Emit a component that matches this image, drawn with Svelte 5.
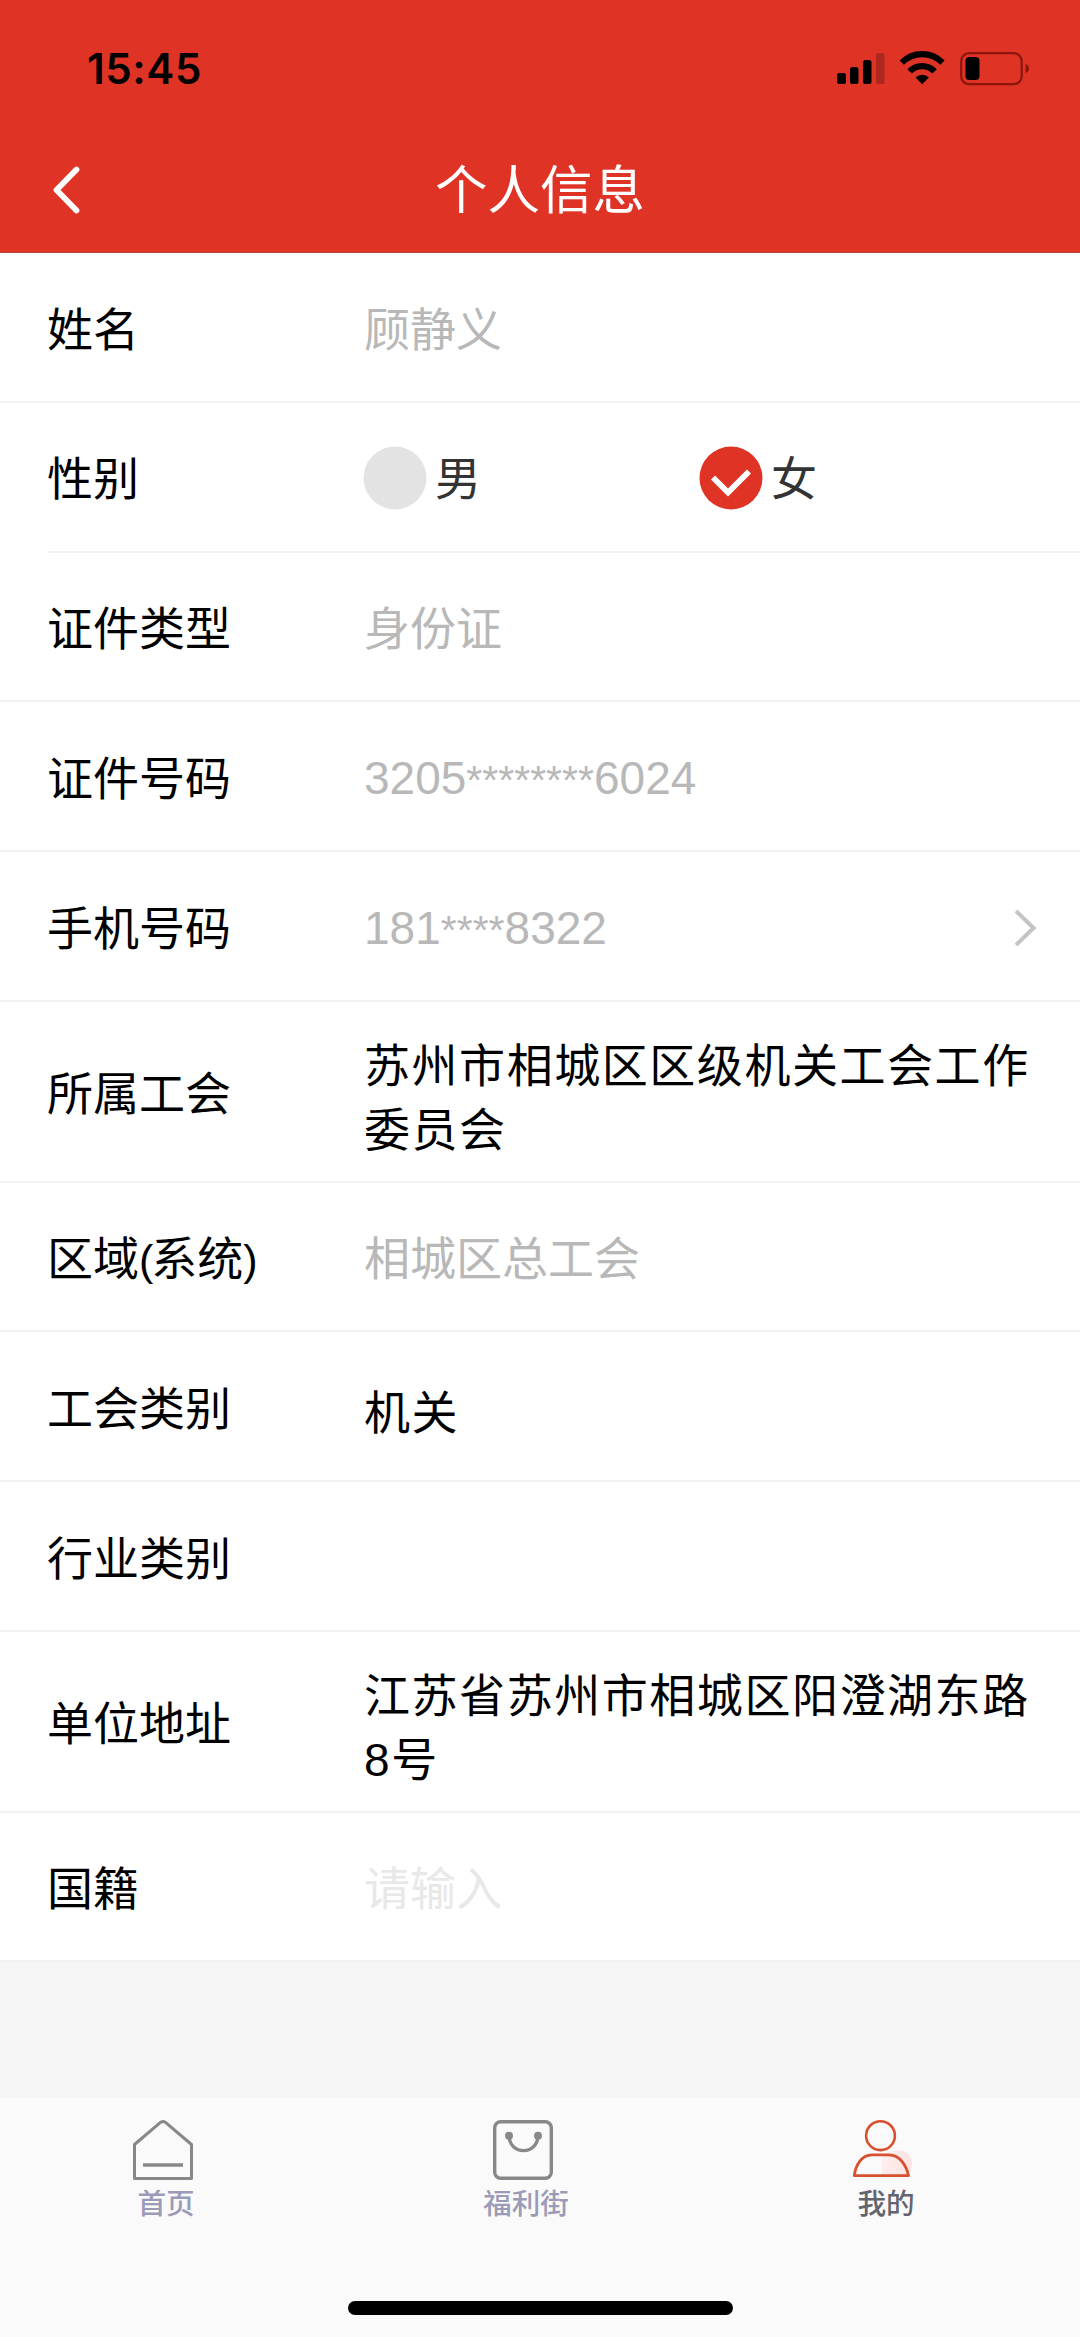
<script>
  const rows = [
    { label: '姓名', value: '顾静义', kind: 'muted' },
    { label: '性别', kind: 'gender', inset: true },
    { label: '证件类型', value: '身份证', kind: 'muted', short: true },
    { label: '证件号码', kind: 'masked', parts: ['3205', '********', '6024'] },
    { label: '手机号码', kind: 'masked', parts: ['181', '****', '8322'], arrow: true },
    { label: '所属工会', value: '苏州市相城区区级机关工会工作委员会', kind: 'text', tall: true },
    { label: '区域', note: '系统', value: '相城区总工会', kind: 'muted', short: true },
    { label: '工会类别', value: '机关', kind: 'text' },
    { label: '行业类别', value: '', kind: 'text' },
    { label: '单位地址', value: '江苏省苏州市相城区阳澄湖东路8号', kind: 'text', tall: true },
    { label: '国籍', value: '请输入', kind: 'placeholder', short: true },
  ];
</script>

<div class="screen">
  <header>
    <div class="status">
      <span class="time">15:45</span>
      <svg width="194" height="36" viewBox="0 0 194 36">
        <rect x="1" y="23" width="9" height="11" rx="2.5" />
        <rect x="14" y="17" width="8.5" height="17" rx="2.5" />
        <rect x="27" y="10" width="8.5" height="24" rx="2.5" />
        <rect x="40" y="3" width="8.5" height="31" rx="2.5" opacity="0.22" />
        <g fill="none" stroke="#000" stroke-width="6.2">
          <path d="M65.8 12.6 A28.5 28.5 0 0 1 106.4 12.6" />
          <path d="M73.6 21.4 A17.5 17.5 0 0 1 98.6 21.4" />
        </g>
        <path d="M86.2 34.2 L79.6 27.6 A9 9 0 0 1 92.8 27.6 Z" />
        <rect x="125.2" y="3.2" width="60.5" height="31" rx="8" fill="none" stroke="#8b160d" stroke-width="2.2" />
        <rect x="129.5" y="7" width="14" height="23" rx="4" />
        <path d="M189.5 14 Q193 15.5 193 18.5 Q193 21.5 189.5 23 Z" fill="#8b160d" />
      </svg>
    </div>
    <div class="nav">
      <svg class="back" width="34" height="52" viewBox="0 0 34 52">
        <path d="M27.5 5.5 L7.5 26 L27.5 46.5" />
      </svg>
      <h1>个人信息</h1>
      <span class="side"></span>
    </div>
  </header>

  <main>
    {#each rows as row}
      <section class="row" class:tall={row.tall} class:short={row.short} class:inset={row.inset}>
        <span class="label">{row.label}{#if row.note}<span class="paren">(</span>{row.note}<span class="paren">)</span>{/if}</span>
        {#if row.kind === 'gender'}
          <div class="options">
            <div class="option">
              <svg width="64" height="64" viewBox="0 0 64 64"><circle cx="32" cy="32" r="31.5" fill="#e3e3e3" /></svg>
              <span>男</span>
            </div>
            <div class="option">
              <svg width="64" height="64" viewBox="0 0 64 64">
                <circle cx="32" cy="32" r="31.5" fill="#df3326" />
                <path d="M14 31.5 L29 46.5 L50 25.5" fill="none" stroke="#fff" stroke-width="5.8" />
              </svg>
              <span>女</span>
            </div>
          </div>
        {:else if row.kind === 'masked'}
          <span class="value muted">{row.parts[0]}<span class="stars">{row.parts[1]}</span>{row.parts[2]}</span>
        {:else}
          <span class="value {row.kind}">{row.value}</span>
        {/if}
        {#if row.arrow}
          <svg class="arrow" width="24" height="40" viewBox="0 0 24 40">
            <path d="M3 2 L20.5 19 L3 36" />
          </svg>
        {/if}
      </section>
    {/each}
  </main>

  <footer>
    <nav>
      <div class="tab">
        <svg width="60" height="60" viewBox="0 0 60 60" fill="none" stroke="#888" stroke-width="3">
          <path d="M1.5 58.5 V24.5 L27.5 2.4 Q30 0.8 32.5 2.4 L58.5 24.5 V58.5 Z" stroke-linejoin="round" />
          <path d="M10 45 H50" stroke-width="3.4" />
        </svg>
        <span>首页</span>
      </div>
      <div class="tab">
        <svg width="60" height="60" viewBox="0 0 60 60" fill="none" stroke="#888" stroke-width="3.4">
          <rect x="1.7" y="1.7" width="56.6" height="56.6" rx="6" />
          <path d="M16 16 C17 35.5 44 35.5 45 16" />
          <circle cx="16" cy="15.8" r="4" fill="#888" stroke="none" />
          <circle cx="45" cy="15.8" r="4" fill="#888" stroke="none" />
        </svg>
        <span>福利街</span>
      </div>
      <div class="tab active">
        <svg width="60" height="60" viewBox="0 0 60 60" fill="none">
          <defs>
            <linearGradient id="glow" x1="0" y1="0" x2="1" y2="0">
              <stop offset="0" stop-color="#fdeeed" />
              <stop offset="1" stop-color="#fde2e1" />
            </linearGradient>
          </defs>
          <path d="M29 36 C36 31 47 28 54 33 C61 39 60 50 54 56 H29 Z" fill="url(#glow)" />
          <circle cx="27.5" cy="15.7" r="14.4" fill="#fafafa" stroke="#d9502f" stroke-width="2.6" />
          <path d="M1.3 55.6 C2.5 46 8 34.8 19 34.8 H36 C47 34.8 53.5 46 55.5 55.6 Z" stroke="#d9502f" stroke-width="2.8" stroke-linejoin="round" />
        </svg>
        <span>我的</span>
      </div>
    </nav>
    <div class="home-bar"></div>
  </footer>
</div>

<style>
  :global(body) {
    margin: 0;
    background: #f5f5f5;
  }

  .screen {
    width: 1080px;
    height: 2337px;
    display: flex;
    flex-direction: column;
    background: #f5f5f5;
    color: #000;
    font-family: 'Liberation Sans', 'Noto Sans CJK SC', sans-serif;
    overflow: hidden;
  }

  header {
    height: 253px;
    box-sizing: border-box;
    background: #df3326;
    border-bottom: 1px solid #b34634;
  }

  .status {
    height: 136px;
    display: flex;
    align-items: center;
    justify-content: space-between;
    box-sizing: border-box;
    padding: 0 50px 0 87px;
  }

  .time {
    padding-top: 2px;
    font-family: Inter, sans-serif;
    font-weight: 600;
    font-size: 42px;
    letter-spacing: 0.6px;
    line-height: 50px;
  }

  .nav {
    height: 108px;
    display: flex;
    align-items: center;
    justify-content: space-between;
    padding: 0 49px;
  }

  .back {
    fill: none;
    stroke: #fff;
    stroke-width: 5.8;
    stroke-linecap: round;
    stroke-linejoin: round;
  }

  .side {
    width: 34px;
  }

  h1 {
    margin: 0;
    padding-top: 2px;
    color: #fff;
    font-size: 52.5px;
    line-height: 60px;
    font-weight: 400;
  }

  .row {
    display: flex;
    align-items: center;
    height: 150px;
    box-sizing: border-box;
    padding: 3px 43px 0 47px;
    background: #fff linear-gradient(#f2f2f2, #f2f2f2) no-repeat right bottom / 100% 2px;
  }

  .row.short {
    height: 149px;
  }

  .row.tall {
    height: 181px;
  }

  .row.inset {
    padding-top: 0;
    background-size: 1032px 2px;
  }

  .row.inset .label,
  .option span {
    padding-top: 2px;
  }

  .label {
    width: 317px;
    flex: none;
    font-size: 46px;
    line-height: 60px;
  }

  .paren {
    font-size: 43px;
    letter-spacing: -2px;
  }

  .value {
    flex: 1;
    font-size: 46px;
    line-height: 60px;
  }

  .muted {
    color: #b8b8b8;
  }

  .placeholder {
    color: #e8e8e8;
  }

  .text {
    flex: none;
    width: 672px;
    padding-top: 9px;
    letter-spacing: 1.55px;
    line-height: 63.5px;
  }

  .row:not(.tall) .text {
    padding-top: 11px;
  }

  .stars {
    font-size: 41px;
  }

  .arrow {
    fill: none;
    stroke: #c4c4c4;
    stroke-width: 4;
    flex: none;
  }

  .options {
    display: flex;
    margin-left: -1px;
    gap: 1px;
  }

  .option {
    width: 335px;
    display: flex;
    align-items: center;
    gap: 8px;
    color: #333;
    font-size: 46px;
    line-height: 60px;
  }

  footer {
    margin-top: auto;
    height: 239px;
    display: flex;
    flex-direction: column;
    align-items: center;
    justify-content: space-between;
    box-sizing: border-box;
    padding: 22px 0;
    background: #fafafa;
  }

  nav {
    display: flex;
    width: 1080px;
  }

  .tab {
    width: 360px;
    box-sizing: border-box;
    padding-right: 34px;
    display: flex;
    flex-direction: column;
    align-items: center;
    color: #9b9bb8;
  }

  .tab span {
    padding-left: 6px;
    margin-top: 6px;
    font-size: 28.6px;
    font-weight: 500;
    line-height: 36px;
  }

  .tab.active {
    color: #64646f;
  }

  .home-bar {
    width: 385px;
    height: 14px;
    border-radius: 7px;
    background: #000;
  }
</style>
